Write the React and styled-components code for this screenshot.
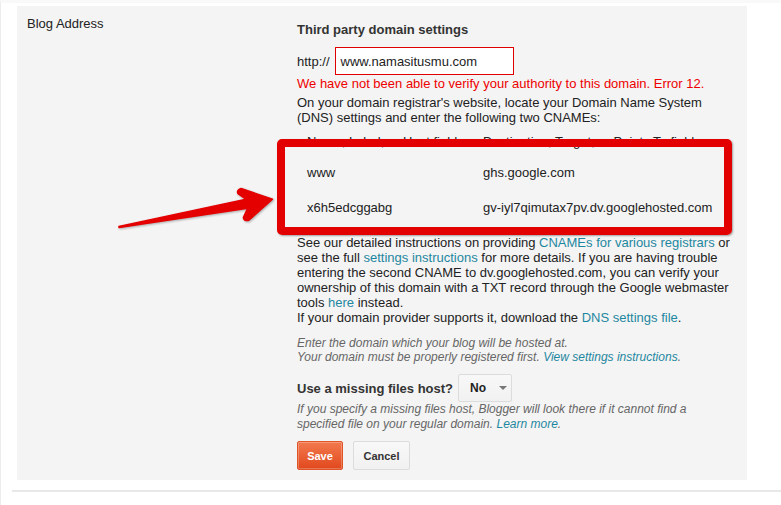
import React from "react";
import styled, { createGlobalStyle } from "styled-components";

const Global = createGlobalStyle`
  html, body { margin: 0; padding: 0; background: #fff; }
  body { font-family: "Liberation Sans", Arial, sans-serif; color: #222; }
  * { box-sizing: border-box; }
`;

const Page = styled.div`
  position: relative;
  width: 781px;
  height: 505px;
  border-left: 1px solid #ececec;
  border-top: 3px solid #f9f9f9;
  padding: 3px 0 0 16px;
  overflow: hidden;
`;

const Panel = styled.div`
  width: 730px;
  height: 474px;
  background: #f4f4f4;
  display: grid;
  grid-template-columns: 280px 1fr;
`;

const Label = styled.div`
  padding: 10px 0 0 10px;
  font-size: 13px;
  line-height: 16px;
  color: #222;
`;

const Content = styled.div`
  padding-top: 16px;
  font-size: 13px;
  color: #222;
  display: flex;
  flex-direction: column;
  align-items: flex-start;
`;

const Title = styled.div`
  font-weight: bold;
  font-size: 13px;
  line-height: 16px;
  color: #333;
`;

const UrlRow = styled.div`
  margin-top: 9px;
  display: flex;
  align-items: center;
  gap: 5px;
`;

const UrlInput = styled.div`
  width: 179px;
  height: 28px;
  border: 1px solid #e00000;
  background: #fff;
  padding: 0 5px;
  display: flex;
  align-items: center;
  font-size: 13px;
  color: #222;
`;

const Text = styled.div`
  margin-top: ${(p) => p.$mt || 0}px;
  font-size: ${(p) => (p.$small ? 12 : 13)}px;
  line-height: ${(p) => p.$lh || 15}px;
  color: ${(p) => (p.$error ? "#ee0000" : p.$muted ? "#666" : "#222")};
  font-style: ${(p) => (p.$italic ? "italic" : "normal")};
  white-space: nowrap;
`;

const Link = styled.a`
  color: #1e87a0;
  text-decoration: none;
`;

const TableWrap = styled.div`
  position: relative;
  margin-top: 9px;
`;

const Grid = styled.div`
  display: grid;
  grid-template-columns: 176px auto;
  padding-left: 10px;
  font-size: 13px;
  color: #222;
`;

const HeadCell = styled.div`
  line-height: 15px;
  height: 21px;
  color: #222;
  white-space: nowrap;
`;

const Cell = styled.div`
  height: 35px;
  display: flex;
  align-items: center;
  white-space: nowrap;
`;

const Highlight = styled.div`
  position: absolute;
  left: -20px;
  top: 5px;
  width: 455px;
  height: 96px;
  border: 8px solid #e30000;
  border-radius: 5px;
  box-shadow: 1px 1px 2px rgba(0, 0, 0, 0.35);
  pointer-events: none;
`;

const HostRow = styled.div`
  margin-top: 10px;
  display: flex;
  align-items: center;
  gap: 5px;
`;

const BoldLabel = styled.span`
  font-weight: bold;
  font-size: 13px;
  color: #333;
`;

const Select = styled.div`
  width: 54px;
  height: 28px;
  border: 1px solid #dcdcdc;
  border-radius: 2px;
  background: linear-gradient(#f8f8f8, #f1f1f1);
  display: flex;
  align-items: center;
  padding-left: 11px;
  gap: 13px;
  font-size: 12px;
  font-weight: bold;
  color: #222;
`;

const Caret = styled.span`
  width: 0;
  height: 0;
  border-left: 4px solid transparent;
  border-right: 4px solid transparent;
  border-top: 4px solid #777;
`;

const Buttons = styled.div`
  margin-top: 9px;
  display: flex;
  gap: 10px;
`;

const Button = styled.button`
  height: 29px;
  min-width: ${(p) => (p.$primary ? 46 : 57)}px;
  padding: 0 8px;
  border-radius: 2px;
  font-family: "Liberation Sans", Arial, sans-serif;
  font-size: 11px;
  font-weight: bold;
  border: 1px solid ${(p) => (p.$primary ? "#e0542a" : "#dcdcdc")};
  color: ${(p) => (p.$primary ? "#fff" : "#333")};
  background: ${(p) =>
    p.$primary ? "linear-gradient(#f27a4e, #e1481c)" : "linear-gradient(#f8f8f8, #f1f1f1)"};
  box-shadow: ${(p) => (p.$primary ? "inset 0 0 0 1px rgba(255,255,255,0.25)" : "none")};
`;

const Divider = styled.div`
  margin: 10px 0 0 -5px;
  height: 2px;
  background: #e8e8e8;
`;

const ArrowSvg = styled.svg`
  position: absolute;
  left: 0;
  top: 0;
  pointer-events: none;
  filter: drop-shadow(1px 1px 1px rgba(0, 0, 0, 0.3));
`;

function Arrow() {
  return (
    <ArrowSvg width="300" height="260" viewBox="0 0 300 260">
      <g transform="translate(118 224) rotate(-10.3)">
        <path
          d="M0 -0.6 L130 -4.5 L123 -11.5 Q122 -15.5 127 -16 L156 0 L129 16.5 Q124 17 124 13 L130 4.5 L0 0.6 Z"
          fill="#e50000"
          stroke="#e50000"
          strokeWidth="1.5"
          strokeLinejoin="round"
        />
      </g>
    </ArrowSvg>
  );
}

export default function App() {
  return (
    <>
      <Global />
      <Page>
        <Panel>
          <Label>Blog Address</Label>
          <Content>
            <Title>Third party domain settings</Title>
            <UrlRow>
              <span>http://</span>
              <UrlInput>www.namasitusmu.com</UrlInput>
            </UrlRow>
            <Text $error $mt={1}>
              We have not been able to verify your authority to this domain. Error 12.
            </Text>
            <Text $mt={4}>
              On your domain registrar's website, locate your Domain Name System
              <br />
              (DNS) settings and enter the following two CNAMEs:
            </Text>
            <TableWrap>
              <Grid>
                <HeadCell>Name, Label, or Host field</HeadCell>
                <HeadCell>Destination, Target, or Points To field</HeadCell>
                <Cell>www</Cell>
                <Cell>ghs.google.com</Cell>
                <Cell>x6h5edcggabg</Cell>
                <Cell>gv-iyl7qimutax7pv.dv.googlehosted.com</Cell>
              </Grid>
              <Highlight />
            </TableWrap>
            <Text $mt={10}>
              See our detailed instructions on providing <Link>CNAMEs for various registrars</Link> or
              <br />
              see the full <Link>settings instructions</Link> for more details. If you are having trouble
              <br />
              entering the second CNAME to dv.googlehosted.com, you can verify your
              <br />
              ownership of this domain with a TXT record through the Google webmaster
              <br />
              tools <Link>here</Link> instead.
              <br />
              If your domain provider supports it, download the <Link>DNS settings file</Link>.
            </Text>
            <Text $small $italic $muted $lh={14} $mt={11}>
              Enter the domain which your blog will be hosted at.
              <br />
              Your domain must be properly registered first. <Link>View settings instructions</Link>.
            </Text>
            <HostRow>
              <BoldLabel>Use a missing files host?</BoldLabel>
              <Select>
                No
                <Caret />
              </Select>
            </HostRow>
            <Text $small $italic $muted $mt={0}>
              If you specify a missing files host, Blogger will look there if it cannot find a
              <br />
              specified file on your regular domain. <Link>Learn more</Link>.
            </Text>
            <Buttons>
              <Button $primary>Save</Button>
              <Button>Cancel</Button>
            </Buttons>
          </Content>
        </Panel>
        <Divider />
        <Arrow />
      </Page>
    </>
  );
}
